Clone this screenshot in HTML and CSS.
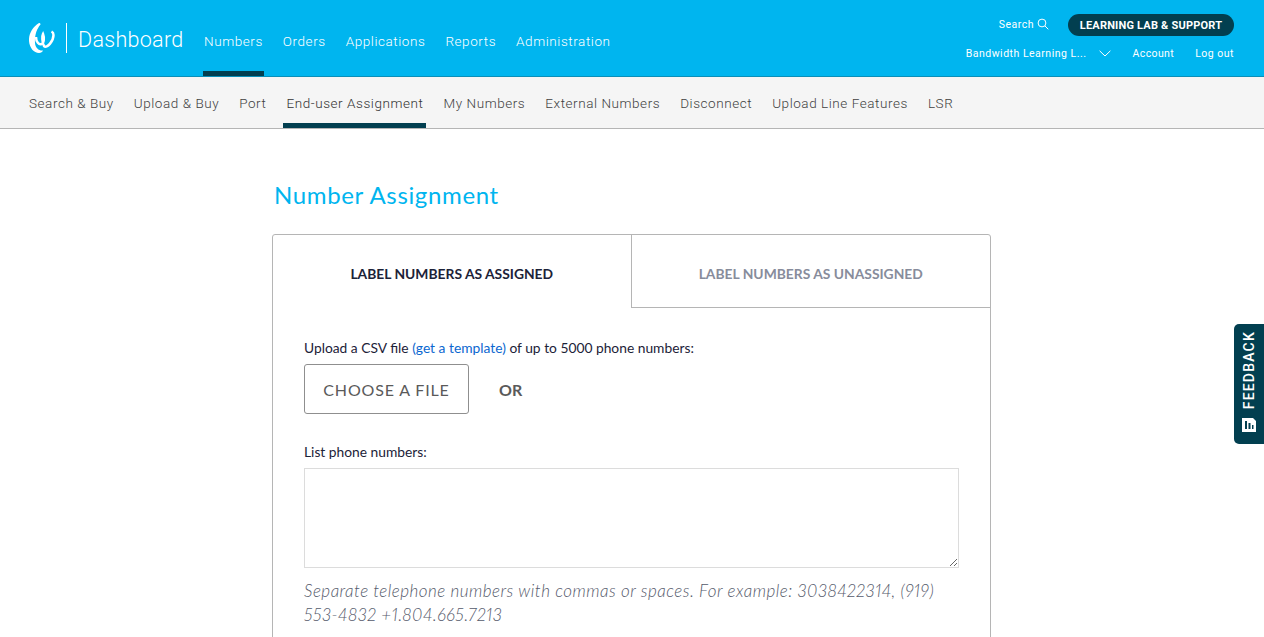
FILE: index.html
```html
<!DOCTYPE html>
<html lang="en">
<head>
<meta charset="utf-8">
<title>Number Assignment</title>
<link rel="stylesheet" href="styles.css">
</head>
<body>
<header class="topbar">
  <div class="brand">
    <svg class="logo" width="26" height="30" viewBox="0 0 26 30" aria-hidden="true">
      <path d="M10 0C3 4-.5 12 0 18c.5 7 5 12 10 12 2 0 3.500-1 4-2.500-4 .5-7.500-2.500-8-7.500-.5-7 1.500-14 5.500-18.500C11.500.5 11 0 10 0Z" fill="#fff"/>
      <path d="M7 14c0 5 3 8 5.500 7 2.500-1 3-6 1.500-10-1 2-1 8 1 12 3 3 9.500-5 9.500-11 0-2.500-1-3-2-3.500" fill="none" stroke="#fff" stroke-width="2.500"/>
    </svg>
    <span class="brand-rule"></span>
    <span class="brand-name">Dashboard</span>
  </div>
  <nav class="mainnav">
    <a class="mainlink is-active">Numbers</a>
    <a class="mainlink">Orders</a>
    <a class="mainlink">Applications</a>
    <a class="mainlink">Reports</a>
    <a class="mainlink">Administration</a>
  </nav>
  <div class="utility">
    <div class="utility-row utility-top">
      <span class="search">Search
        <svg width="12" height="12" viewBox="0 0 12 12" aria-hidden="true"><circle cx="5" cy="5" r="3.900" fill="none" stroke="#fff" stroke-width="1"/><path d="M8 8l3.300 3.300" stroke="#fff" stroke-width="1" fill="none"/></svg>
      </span>
      <a class="pill">LEARNING LAB &amp; SUPPORT</a>
    </div>
    <div class="utility-row utility-bottom">
      <span class="account-name">Bandwidth Learning L...</span>
      <svg class="chev" width="12" height="7" viewBox="0 0 12 7" aria-hidden="true"><path d="M.6.8 6 6 11.400.8" fill="none" stroke="#fff" stroke-width="1"/></svg>
      <a class="account">Account</a>
      <a class="logout">Log out</a>
    </div>
  </div>
</header>
<nav class="subnav">
  <a class="sublink">Search &amp; Buy</a>
  <a class="sublink">Upload &amp; Buy</a>
  <a class="sublink">Port</a>
  <a class="sublink is-active">End-user Assignment</a>
  <a class="sublink">My Numbers</a>
  <a class="sublink">External Numbers</a>
  <a class="sublink">Disconnect</a>
  <a class="sublink">Upload Line Features</a>
  <a class="sublink">LSR</a>
</nav>
<main class="content">
  <h1 class="title">Number Assignment</h1>
  <section class="card">
    <div class="tabs">
      <div class="tab is-current">LABEL NUMBERS AS ASSIGNED</div>
      <div class="tab">LABEL NUMBERS AS UNASSIGNED</div>
    </div>
    <div class="card-body">
      <p class="label">Upload a CSV file <a class="link">(get a template)</a> of up to 5000 phone numbers:</p>
      <div class="file-row">
        <button class="file-button" type="button">CHOOSE A FILE</button>
        <span class="or">OR</span>
      </div>
      <label class="label list-label" for="phones">List phone numbers:</label>
      <textarea class="phones" id="phones"></textarea>
      <p class="hint">Separate telephone numbers with commas or spaces. For example: 3038422314, (919) <span class="nowrap">553-4832</span> +1.804.665.7213</p>
    </div>
  </section>
</main>
<a class="feedback">
  <svg width="14" height="14" viewBox="0 0 14 14" aria-hidden="true"><path d="M0 0h11l3 3v11H0z" fill="#fff"/><path d="M3 3h2v8H3zM6.500 5h2v6h-2zM10 7h1.500v4H10z" fill="#023f50"/></svg>
  <span>FEEDBACK</span>
</a>
</body>
</html>
```
FILE: styles.css
```css
* { box-sizing: border-box; }
html, body { margin: 0; height: 100%; overflow: hidden; background: #fff; }
body { font-family: "Lato", "Liberation Sans", sans-serif; color: #1c2238; }
a { text-decoration: none; }

.topbar {
  height: 77px;
  background: #00b5ef;
  border-bottom: 1px solid #0a8fb8;
  display: flex;
  color: #fff;
  font-family: "Roboto", "Liberation Sans", sans-serif;
  padding-left: 29px;
}
.brand { display: flex; align-items: center; height: 76px; }
.logo { display: block; margin-top: 0; }
.brand-rule { width: 1px; height: 30px; background: #fff; margin-left: 11px; }
.brand-name { font-size: 21.500px; font-weight: 300; letter-spacing: .3px; margin-left: 11px; width: 125px; padding-top: 2px; }
.mainnav { display: flex; height: 76px; }
.mainlink {
  font-size: 13.500px;
  font-weight: 300;
  letter-spacing: .57px;
  padding: 0 1px;
  margin-right: 18px;
  height: 76px;
  line-height: 82px;
  border-bottom: 5px solid transparent;
  color: #fff;
}
.mainlink.is-active { border-bottom-color: #023f50; }
.utility { margin-left: auto; padding-right: 30px; font-size: 10.500px; letter-spacing: .5px; }
.utility-row { display: flex; align-items: center; justify-content: flex-end; }
.utility-top { height: 22px; margin-top: 14px; }
.search { display: flex; align-items: center; gap: 3px; margin-right: 19px; padding-bottom: 2px; }
.pill {
  background: #023f50;
  color: #fff;
  height: 22px;
  line-height: 23px;
  border-radius: 11px;
  width: 166px;
  text-align: center;
  font-weight: 700;
  font-size: 11px;
  letter-spacing: .2px;
}
.utility-bottom { margin-top: 7px; height: 20px; }
.chev { margin-left: 13px; }
.account { margin-left: 21px; color: #fff; letter-spacing: .4px; }
.logout { margin-left: 21px; color: #fff; }

.subnav {
  height: 52px;
  background: #f5f5f5;
  border-bottom: 1px solid #b5b5b5;
  display: flex;
  padding-left: 26px;
  font-family: "Roboto", "Liberation Sans", sans-serif;
  font-size: 13.500px;
  font-weight: 300;
  letter-spacing: .56px;
}
.sublink {
  color: #3f3f3f;
  padding: 0 3px;
  margin-right: 14px;
  line-height: 52px;
  height: 51px;
  border-bottom: 5px solid transparent;
}
.sublink.is-active { border-bottom-color: #023f50; color: #333; }

.content { width: 720px; margin-left: 272px; }
.title {
  margin: 0;
  padding: 51px 0 0 2px;
  font-size: 24px;
  line-height: 30px;
  font-weight: 400;
  color: #00b5ef;
  height: 105px;
  letter-spacing: .65px;
}
.card { width: 719px; border: 1px solid #b5b5b5; border-radius: 3px; }
.tabs { display: flex; height: 73px; }
.tab {
  width: 359px;
  font-size: 13.850px;
  font-weight: 700;
  text-align: center;
  line-height: 78px;
  color: #878c9b;
  border-bottom: 1px solid #b5b5b5;
}
.tab.is-current { color: #1c2238; border-bottom: 0; border-right: 1px solid #b5b5b5; }
.card-body { padding: 31px 31px 40px; }
.label { display: block; margin: 0; font-size: 13.800px; line-height: 18px; color: #1c2238; }
.link { color: #0b67d0; }
.file-row { display: flex; align-items: center; margin-top: 7px; height: 50px; }
.file-button {
  width: 165px;
  height: 50px;
  background: #fff;
  border: 1px solid #8f8f8f;
  border-radius: 3px;
  font-family: "Lato", "Liberation Sans", sans-serif;
  font-size: 16px;
  letter-spacing: .85px;
  color: #5a5a5a;
  padding: 0;
}
.or { margin-left: 30px; font-size: 16px; font-weight: 700; color: #5a5a5a; }
.list-label { margin-top: 29px; }
.phones {
  display: block;
  width: 655px;
  height: 100px;
  margin-top: 7px;
  border: 1px solid #dcdcdc;
  background: #fff;
  padding: 6px;
}
.hint {
  margin: 11px 0 0;
  font-size: 17px;
  line-height: 24px;
  font-style: italic;
  font-weight: 300;
  letter-spacing: .5px;
  font-variant-numeric: proportional-nums;
  color: #555a6b;
}
.nowrap { white-space: nowrap; }

.feedback {
  position: absolute;
  right: 0;
  top: 324px;
  width: 30px;
  height: 120px;
  background: #023f50;
  border-radius: 5px 0 0 5px;
  color: #fff;
  display: flex;
  flex-direction: column-reverse;
  align-items: center;
  justify-content: flex-start;
  padding: 0 0 12px;
  gap: 9px;
  font-family: "Roboto", "Liberation Sans", sans-serif;
}
.feedback span {
  writing-mode: vertical-rl;
  transform: rotate(180deg);
  font-size: 14px;
  font-weight: 500;
  letter-spacing: 1.200px;
  line-height: 16px;
}
```
